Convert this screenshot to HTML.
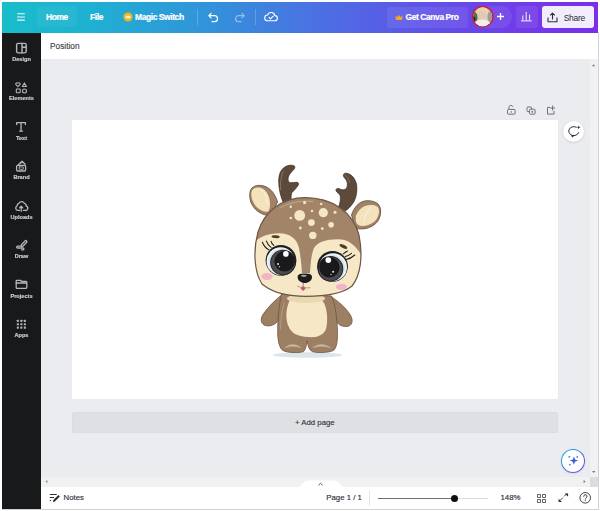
<!DOCTYPE html>
<html><head><meta charset="utf-8">
<style>
*{box-sizing:border-box;margin:0;padding:0}
html,body{width:600px;height:511px;overflow:hidden;background:#fff;font-family:"Liberation Sans",sans-serif}
.a{position:absolute}
#app{position:absolute;left:0;top:0;width:600px;height:511px;background:#fff;overflow:hidden}
#cv{left:41px;top:59px;width:557px;height:428px;background:#ebecf0}
#bordR{left:598px;top:32px;width:1px;height:478px;background:#d2d2d5}
#bordB{left:2px;top:509px;width:597px;height:1px;background:#d2d2d5}
#top{left:2px;top:2px;width:596px;height:30.7px;background:linear-gradient(90deg,#18bdca 0%,#1fb0d2 15%,#3392da 35%,#4a72e2 52%,#5e54e8 70%,#6e3ee9 85%,#7a2ee8 100%)}
#side{left:2px;top:32.7px;width:39px;height:476.3px;background:#18191b}
#hdr{left:41px;top:32.7px;width:557px;height:26.3px;background:#fff}
#bot{left:41px;top:487px;width:557px;height:22px;background:#fff}
.t{position:absolute;white-space:nowrap;line-height:1}
.w{color:#fff;font-weight:bold;font-size:8.5px;letter-spacing:-0.43px;-webkit-text-stroke:0.2px #fff}
.sl{position:absolute;width:39px;text-align:center;color:#cdced1;font-weight:bold;font-size:5.6px;line-height:1;-webkit-text-stroke:0.18px #cdced1;will-change:transform}
.si{position:absolute}
</style></head><body>
<div id="app">
  <div id="top" class="a">
    <!-- hamburger -->
    <svg class="a" style="left:14px;top:10px" width="10" height="10" viewBox="0 0 10 10"><path d="M1.5 1.7h7M1.5 4.9h7M1.5 8.1h7" stroke="#eefafb" stroke-width="1.05" stroke-linecap="round"/></svg>
    <div class="a" style="left:35px;top:4px;width:40px;height:21px;border-radius:3px;background:rgba(255,255,255,0.05)"></div>
    <div class="t w" style="left:44px;top:11px">Home</div>
    <div class="t w" style="left:88px;top:11px">File</div>
    <svg class="a" style="left:121px;top:10px" width="10" height="10" viewBox="0 0 10 10"><circle cx="5" cy="5" r="4.6" fill="#f5b21b"/><path d="M2.8 6.3L2.5 3.4 3.9 4.6 5 3 6.1 4.6 7.5 3.4 7.2 6.3z" fill="#fff"/></svg>
    <div class="t w" style="left:133px;top:11px">Magic Switch</div>
    <div class="a" style="left:195px;top:7px;width:1px;height:16px;background:rgba(255,255,255,0.2)"></div>
    <svg class="a" style="left:205px;top:9px" width="13" height="12" viewBox="0 0 13 12"><path d="M4 2.5L1.8 4.7 4 6.9M2 4.7h5.5a3 3 0 0 1 0 6H5" fill="none" stroke="#fff" stroke-width="1.2" stroke-linecap="round" stroke-linejoin="round"/></svg>
    <svg class="a" style="left:231px;top:9px" width="13" height="12" viewBox="0 0 13 12"><path d="M9 2.5l2.2 2.2L9 6.9M11 4.7H5.5a3 3 0 0 0 0 6H8" fill="none" stroke="rgba(255,255,255,0.45)" stroke-width="1.2" stroke-linecap="round" stroke-linejoin="round"/></svg>
    <div class="a" style="left:253px;top:7px;width:1px;height:16px;background:rgba(255,255,255,0.2)"></div>
    <svg class="a" style="left:262px;top:9px" width="14" height="11" viewBox="0 0 14 11"><path d="M3.6 9.8h7a2.6 2.6 0 0 0 .3-5.2A3.8 3.8 0 0 0 3.6 4 2.9 2.9 0 0 0 3.6 9.8z" fill="none" stroke="#fff" stroke-width="1.1" stroke-linejoin="round"/><path d="M5 6.4l1.5 1.5 2.7-2.7" fill="none" stroke="#fff" stroke-width="1.1" stroke-linecap="round" stroke-linejoin="round"/></svg>

    <div class="a" style="left:385px;top:5px;width:81px;height:21px;border-radius:3px;background:rgba(255,255,255,0.08)"></div>
    <svg class="a" style="left:393px;top:12px" width="8" height="7" viewBox="0 0 8 7"><path d="M1 6L.4 1.5 2.5 3.3 4 .8 5.5 3.3 7.6 1.5 7 6z" fill="#f5a623"/></svg>
    <div class="t w" style="left:403.5px;top:11px">Get Canva Pro</div>
    <div class="a" style="left:470px;top:4px;width:40px;height:22px;border-radius:11px;background:rgba(255,255,255,0.08)"></div>
    <svg class="a" style="left:468px;top:2px" width="30" height="30" viewBox="470 4 30 30">
      <defs><clipPath id="av"><circle cx="482.7" cy="16.7" r="9.5"/></clipPath></defs>
      <circle cx="482.7" cy="16.7" r="10.8" fill="#e0121f"/>
      <g clip-path="url(#av)">
        <rect x="472" y="6" width="22" height="22" fill="#cfd0c8"/>
        <ellipse cx="474.5" cy="17" rx="3.2" ry="5" fill="#52704a"/>
        <ellipse cx="473.8" cy="19" rx="1.8" ry="2.5" fill="#1f2a22"/>
        <ellipse cx="490.5" cy="17" rx="3" ry="6" fill="#9c9d98"/>
        <ellipse cx="482" cy="11.5" rx="6" ry="5" fill="#e6d3b6"/>
        <ellipse cx="481.8" cy="16" rx="4.3" ry="5" fill="#e3c8b2"/>
        <ellipse cx="482.5" cy="26" rx="9" ry="6.5" fill="#f2f0ec"/>
      </g>
    </svg>
    <svg class="a" style="left:494px;top:10px" width="9" height="9" viewBox="0 0 9 9"><path d="M4.5 1v7M1 4.5h7" stroke="#fff" stroke-width="1.3"/></svg>
    <div class="a" style="left:514px;top:4px;width:22px;height:22px;border-radius:3px;background:rgba(255,255,255,0.08)"></div>
    <svg class="a" style="left:519px;top:10px" width="11" height="10" viewBox="0 0 11 10"><path d="M0 8.9h10.7M1.8 8.6V3.5M5.2 8.6V0M8.6 8.6V2.5" stroke="#fff" stroke-width="0.9"/></svg>
    <div class="a" style="left:540px;top:4px;width:52px;height:22px;border-radius:3px;background:#f1edfc"></div>
    <svg class="a" style="left:545px;top:10px" width="11" height="11" viewBox="0 0 11 11"><path d="M5.5 7.5V1.2M3.2 3.4L5.5 1.1 7.8 3.4M1 5.5v4.3h9V5.5" fill="none" stroke="#2d2f36" stroke-width="1.1" stroke-linejoin="round"/></svg>
    <div class="t" style="left:561.7px;top:11.5px;font-size:8.5px;color:#2d2f36;letter-spacing:-0.28px">Share</div>
  </div>

  <div id="side" class="a"></div>
  <div class="sl" style="left:2px;top:56.8px">Design</div>
  <div class="sl" style="left:2px;top:95.7px">Elements</div>
  <div class="sl" style="left:2px;top:135.8px">Text</div>
  <div class="sl" style="left:2px;top:174.6px">Brand</div>
  <div class="sl" style="left:2px;top:214.5px">Uploads</div>
  <div class="sl" style="left:2px;top:254.3px">Draw</div>
  <div class="sl" style="left:2px;top:293.6px">Projects</div>
  <div class="sl" style="left:2px;top:332.8px">Apps</div>
  <svg class="a" style="left:0;top:0" width="42" height="350" viewBox="0 0 42 350">
    <g fill="none" stroke="#b6b7bb" stroke-width="1.3" stroke-linejoin="round" stroke-linecap="round">
      <!-- design -->
      <rect x="16.6" y="43.4" width="9.6" height="9.5" rx="1.7" stroke-width="1.4"/>
      <path d="M22 43.6v9.2M22 47.3h4.2" stroke-width="1.4"/>
      <!-- elements -->
      <path d="M17.95 86.6L15.7 84.3A1.4 1.4 0 0 1 17.95 83.1A1.4 1.4 0 0 1 20.2 84.3Z" stroke-width="1.05"/>
      <path d="M24.4 82.9l2.1 3.6h-4.2z" stroke-width="1.05"/>
      <rect x="16.3" y="88.9" width="3.9" height="3.9" rx="0.6" stroke-width="1.05"/>
      <circle cx="24.5" cy="90.9" r="2" stroke-width="1.05"/>
      <!-- text -->
      <path d="M16.7 124.6v-1.9h8.7v1.9M21.05 122.8v8.3M19.6 131.1h2.9"/>
      <!-- brand -->
      <rect x="16.6" y="165.4" width="9" height="5.6" rx="1.2"/>
      <rect x="19.2" y="166.9" width="4.1" height="2.4" rx="0.3" stroke-width="0.9"/>
      <path d="M18.3 164.8l3.8-3.6 3 3"/>
      <path d="M20.2 163.3l2.2-1.3"/>
      <!-- uploads -->
      <path d="M19.4 210.4h-1.4a2.3 2.3 0 0 1-.9-4.4 2.2 2.2 0 0 1 1.6-2.4 3.1 3.1 0 0 1 5.6-.3 2.2 2.2 0 0 1 1.7 2.6 2.3 2.3 0 0 1-1 4.5h-1.6"/>
      <path d="M21.2 211.3v-5M19.6 207.9l1.6-1.6 1.6 1.6"/>
      <!-- draw -->
      <path d="M21.4 244.8l3.7-3.9a1 1 0 0 1 1.5 1.4l-3.7 3.9-1.9.4z"/>
      <path d="M20.2 246.2h-2.6a.9.9 0 0 0 0 1.8h5.4a.9.9 0 0 1 0 1.8h-1.5"/>
      <!-- projects -->
      <path d="M16.2 287.6v-6.6a.7.7 0 0 1 .7-.7h3.6l1.2 1.2h4.4a.7.7 0 0 1 .7.7v5.4a.8.8 0 0 1-.8.8h-9a.8.8 0 0 1-.8-.8z"/>
      <path d="M16.3 283h10.2"/>
    </g>
    <g fill="#b3b4b8">
      <rect x="16.8" y="319.8" width="2.1" height="2.1" rx="0.4"/><rect x="20.3" y="319.8" width="2.1" height="2.1" rx="0.4"/><rect x="23.8" y="319.8" width="2.1" height="2.1" rx="0.4"/>
      <rect x="16.8" y="323.2" width="2.1" height="2.1" rx="0.4"/><rect x="20.3" y="323.2" width="2.1" height="2.1" rx="0.4"/><rect x="23.8" y="323.2" width="2.1" height="2.1" rx="0.4"/>
      <rect x="16.8" y="326.6" width="2.1" height="2.1" rx="0.4"/><rect x="20.3" y="326.6" width="2.1" height="2.1" rx="0.4"/><rect x="23.8" y="326.6" width="2.1" height="2.1" rx="0.4"/>
    </g>
  </svg>

  <div id="hdr" class="a">
    <div class="t" style="left:9px;top:9.3px;font-size:8.3px;color:#3a3c41;-webkit-text-stroke:0.12px #3a3c41">Position</div>
  </div>

  <div id="cv" class="a"></div>
  <!-- page -->
  <div class="a" style="left:71.7px;top:119.8px;width:486.6px;height:279.5px;background:#fff;box-shadow:0 0 1px rgba(0,0,0,0.06)"></div>
  <div class="a" style="left:71.7px;top:412px;width:486.6px;height:21px;background:#dfe0e4;border-radius:2.5px;box-shadow:inset 0 0 0 0.5px rgba(0,0,0,0.03)"></div>
  <div class="t" style="left:295px;top:419px;font-size:7.8px;color:#2f3136;-webkit-text-stroke:0.12px #2f3136">+ Add page</div>

  <svg class="a" style="left:230px;top:155px" width="170" height="210" viewBox="230 155 170 210">
    <defs>
      <clipPath id="headclip"><path d="M305 197.6C332 197.6 353 212 359 235C363 255 361 275 352 286C343 293.5 325 296.3 306 296.3C289 296.3 272 292.5 262 284C254 272 253 250 258 232C264 212 282 197.6 305 197.6Z"/></clipPath>
    </defs>
    <!-- shadow -->
    <ellipse cx="307.5" cy="355" rx="35" ry="2.8" fill="#dbe6eb"/>
    <!-- antlers -->
    <g fill="#5e4a3b" stroke="#3a2b22" stroke-width="0.7">
      <path d="M283.2 202.5C280.5 196 278.6 188 278.7 181C278.8 174 281 169.5 284.5 167.2C287.5 165.2 291 164.8 293.5 165.5C295 166 295.3 167.8 294.2 169C292 171.5 289 174 288.2 177.5C287.8 179.5 288.2 181.5 289.5 182.5C291.5 183 294.5 182.3 297 182.3C298.8 182.5 299 184 298 185.5C296.5 188 294 190.5 292 192.5C291 194.5 291 197 291.3 202.5Z"/>
      <path d="M338.8 206.5C340.5 202 341 197.5 339.8 194.8C338.5 193 336.5 192.5 336 190.5C335.7 188.5 337.5 188 339 188.7C341 189.6 343.5 190.3 345.5 189.3C347.8 187.5 347.8 183 346.5 180.5C345.5 178.5 343.5 177.5 343.3 175.5C343.3 173.5 345 172.9 347 173.3C351 174 355 178 356.5 184C357.5 190 356.5 197 354 201.5C351.5 206 348 209 345.5 211Z"/>
    </g>
    <path d="M280.6 190C280.1 183 280.9 176 283.2 171.5" fill="none" stroke="#8a7464" stroke-width="0.9" stroke-linecap="round"/>
    <path d="M345.2 175.2C347.5 177 349 179.5 349.6 182.5" fill="none" stroke="#8a7464" stroke-width="0.8" stroke-linecap="round"/>
    <!-- ears -->
    <g stroke="#6f5543" stroke-width="0.9">
      <path d="M277.5 202C275.5 194.5 271 189 266 186.8C261 184.6 255 184.8 252 188C249 191 249.3 197 250.8 202C252.5 207 257 212 263.8 214.6L271 216Z" fill="#a08366"/>
      <path d="M351.5 215C353.5 209 357 204 362 201.8C367 199.8 374 200.5 378 204C381.5 207.5 381.2 214 379 219C377 223.5 372 227 366 228.5C362 229.3 358.5 228.8 355.5 228.5Z" fill="#a08366"/>
    </g>
    <path d="M251.3 193C251.5 189 255 187.3 259 187.6C263 188 266.5 191 268.5 196C270.5 201 270.5 207 268.6 211.6C264 212.5 258.5 209.5 255 205C252.3 201.5 251.1 197 251.3 193Z" fill="#f4e2bd"/>
    <path d="M355.8 216C358 211 361 207.5 365 206C369.5 204.6 375 204.8 377.6 207C379.8 209.5 379.4 214 377 218.5C374.5 222.5 369 225.5 363 226C359.5 226.3 356.5 224.5 355.8 221Z" fill="#f4e2bd"/>
    <path d="M262 190C265 193 267 198 267.5 204" fill="none" stroke="#fbf1dc" stroke-width="1.2" stroke-linecap="round" opacity="0.8"/>
    <path d="M371 208C367 211 364.5 216 364 222" fill="none" stroke="#fbf1dc" stroke-width="1.2" stroke-linecap="round" opacity="0.8"/>
    <!-- arms -->
    <g fill="#9d7f63" stroke="#6f5543" stroke-width="0.8">
      <path d="M283 294C276 299 268 307 263.1 314.3C260 319 261 323 264 325C268 327 274 325.5 277 322C279 318 281 310 284 303Z"/>
      <path d="M330 296C337 300 346 308 349.9 314.3C353 319 353 324 349 326C345 327.5 340 326 337.5 323C335 318 333 309 329.5 303Z"/>
    </g>
    <!-- body -->
    <path d="M281.5 293.8C279 305 277.5 320 277.7 333.4C278 342 279.5 348 283 350.5C287 353 299 353 303.4 351.7C305.5 350 306.3 346 307.1 340.7C308 346 309 350 312.5 351.7C317 353 329 353 333.7 350.3C337 347 337.8 340 337.4 330C337 318 335.5 305 331.5 296Z" fill="#9d7f63" stroke="#6f5543" stroke-width="0.8"/>
    <path d="M290.2 299.7C287 305 286 313 286.5 318C287 326 291 333 297.5 335C302 337 311 337.5 315 337.1C320 336 324 334 326 329C328 322 327.5 310 324 303C321 298 316 296 313 296.7Z" fill="#f6e7c6"/>
    <path d="M284.8 347.6Q292.6 341.6 300.8 347.4Q292.6 344.8 284.8 347.6ZM313 347.4Q321.3 341.6 330.3 347.6Q321.3 344.8 313 347.4Z" fill="#cdb8a2" stroke="#cdb8a2" stroke-width="0.5" stroke-linejoin="round"/>
    <path d="M284.3 302.6C282 310 280.5 320 280.5 329" fill="none" stroke="#bba18a" stroke-width="0.8" stroke-linecap="round"/>
    <ellipse cx="306" cy="298.5" rx="19" ry="4.5" fill="#ead8b3"/>
    <!-- head -->
    <path d="M305 197.6C332 197.6 353 212 359 235C363 255 361 275 352 286C343 293.5 325 296.3 306 296.3C289 296.3 272 292.5 262 284C254 272 253 250 258 232C264 212 282 197.6 305 197.6Z" fill="#a28569"/>
    <g clip-path="url(#headclip)">
      <path d="M250 252C252 240 264 233.3 279 233.3C290 233.3 297 239 299 248C300.5 256 301.5 264 302 273L310 273C310.5 264 311 256 313.5 249C317 242 326 239.3 338 239.3C349 239.3 356 246 362 256L366 310L250 310Z" fill="#f6e7c6"/>
      <path d="M280 208C290 202 302 200.5 313 201.5" fill="none" stroke="#bca085" stroke-width="1.3" stroke-linecap="round"/>
    </g>
    <path d="M305 197.6C332 197.6 353 212 359 235C363 255 361 275 352 286C343 293.5 325 296.3 306 296.3C289 296.3 272 292.5 262 284C254 272 253 250 258 232C264 212 282 197.6 305 197.6Z" fill="none" stroke="#6f5543" stroke-width="1.2"/>
    <!-- spots -->
    <g fill="#f5e6c4">
      <circle cx="299.7" cy="215.4" r="5.4"/><circle cx="323.3" cy="212.7" r="4.6"/><circle cx="311.4" cy="222.6" r="3.4"/>
      <circle cx="312.8" cy="235.4" r="3.7"/><circle cx="331.1" cy="224.8" r="2.8"/><circle cx="304.6" cy="202.6" r="1.6"/>
      <circle cx="290.8" cy="206.7" r="1.2"/><circle cx="290.8" cy="218" r="1.3"/><circle cx="312" cy="211" r="1.2"/>
      <circle cx="321.2" cy="203.9" r="1.2"/><circle cx="335" cy="212.3" r="1.5"/><circle cx="300.4" cy="228" r="1.4"/>
      <circle cx="322.3" cy="228.6" r="1.4"/>
    </g>
    <!-- brows -->
    <ellipse cx="275.6" cy="236.7" rx="4.1" ry="1.4" fill="#4f3d2c" transform="rotate(3 275.6 236.7)"/>
    <ellipse cx="343.4" cy="246.5" rx="4.2" ry="1.6" fill="#4f3d2c" transform="rotate(24 343.4 246.5)"/>
    <!-- cheeks -->
    <ellipse cx="267" cy="276.5" rx="5.6" ry="3.4" fill="#f3b3c8"/>
    <ellipse cx="341.3" cy="286.8" rx="5.5" ry="3.1" fill="#f3b3c8"/>
    <!-- lashes -->
    <g fill="none" stroke="#1e1c1d" stroke-width="1.05" stroke-linecap="round">
      <path d="M268.8 249.8Q264.5 247.8 262.4 242.3"/><path d="M271 247.4Q267.8 245.2 266.4 241.1"/><path d="M273.8 245.4Q271.6 243.6 271.1 241.3"/>
      <path d="M343.3 253.8Q345.5 252 347.4 251"/><path d="M345.2 256.6Q348.5 255.8 351.5 253.4"/><path d="M346.2 259.5Q350.5 258.8 354.8 255"/>
    </g>
    <!-- eyes -->
    <circle cx="281" cy="260.3" r="15.4" fill="#1f1d1e"/>
    <circle cx="280.6" cy="261.2" r="14" fill="#eef4f7"/>
    <circle cx="281.6" cy="261.8" r="13.2" fill="#d4e6f0"/>
    <circle cx="283" cy="262.5" r="12.8" fill="#1d1d20"/>
    <circle cx="283" cy="262.5" r="11.9" fill="#4a4a4f"/>
    <circle cx="284.6" cy="261.2" r="10.2" fill="#19191c"/>
    <circle cx="285.9" cy="253.9" r="2.8" fill="#fff"/>
    <circle cx="278" cy="264" r="1" fill="#e6e6e6"/><circle cx="279.5" cy="266.8" r="0.7" fill="#cfcfcf"/>

    <circle cx="332.5" cy="266.3" r="15.4" fill="#1f1d1e"/>
    <circle cx="333" cy="267.2" r="14" fill="#eef4f7"/>
    <circle cx="331.9" cy="267.9" r="13.2" fill="#d4e6f0"/>
    <circle cx="330.5" cy="268.8" r="12.8" fill="#1d1d20"/>
    <circle cx="330.5" cy="268.8" r="11.9" fill="#4a4a4f"/>
    <circle cx="329.4" cy="267.3" r="10.2" fill="#19191c"/>
    <circle cx="328.3" cy="260.1" r="2.9" fill="#fff"/>
    <circle cx="333.1" cy="271.8" r="1" fill="#e6e6e6"/><circle cx="331" cy="274.5" r="0.7" fill="#cfcfcf"/>
    <!-- nose & mouth -->
    <path d="M297.6 277C297.6 274.2 300.8 273.6 304.8 273.6C308.8 273.6 312 274.2 312 277C312 280.6 308.5 283 304.8 283C301.1 283 297.6 280.6 297.6 277Z" fill="#1c1c1f"/>
    <ellipse cx="303.8" cy="275.8" rx="3" ry="1.1" fill="#a0a0a4"/>
    <path d="M303.2 283v3" stroke="#6d4b3b" stroke-width="0.6"/>
    <path d="M297.5 286.2Q300.5 288.6 303.2 286.6Q306 288.6 310 287.8" fill="none" stroke="#8a6a55" stroke-width="0.6" stroke-linecap="round"/>
    <path d="M303.1 286.6L305.3 288.6 303.1 290.6 300.9 288.6Z" fill="#d2457a" stroke="#d2457a" stroke-width="0.6" stroke-linejoin="round"/>
  </svg>

  <!-- page actions -->
  <svg class="a" style="left:500px;top:100px" width="60" height="20" viewBox="500 100 60 20">
    <g fill="none" stroke="#696c72" stroke-width="0.95" stroke-linejoin="round">
      <rect x="507.5" y="109.4" width="7.6" height="4.8" rx="0.9"/>
      <path d="M508.9 109.4v-1.9a2.05 2.05 0 0 1 4-.7"/>
      <rect x="527" y="107" width="4.6" height="4.6" rx="0.9"/>
      <rect x="529.5" y="109.2" width="5.6" height="5" rx="0.9" fill="#ebecf0"/>
      <path d="M554 111v3.1h-6.5v-6.7h2.6M552.6 105.5v5M550.2 108h4.8"/>
    </g>
    <path d="M511.3 111.1v1.7" stroke="#696c72" stroke-width="0.9"/>
    <path d="M532.3 110.8v2M531.3 111.8h2" stroke="#696c72" stroke-width="0.8"/>
  </svg>
  <!-- comment button -->
  <div class="a" style="left:562.9px;top:120.8px;width:21.6px;height:21.6px;border-radius:50%;background:#fff;box-shadow:0 0.5px 2px rgba(0,0,0,0.18)"></div>
  <svg class="a" style="left:565px;top:123px" width="18" height="18" viewBox="565 123 18 18">
    <path d="M576.4 127.2A5.1 4.5 0 1 0 578.7 132.6" fill="none" stroke="#2a2c31" stroke-width="1" stroke-linecap="round"/>
    <path d="M571 135.2L574.6 135.6 572.2 137.5Z" fill="#2a2c31"/>
    <path d="M578.7 125.4l.55 1.35 1.35.55-1.35.55-.55 1.35-.55-1.35-1.35-.55 1.35-.55z" fill="#2a2c31"/>
  </svg>
  <!-- magic button -->
  <div class="a" style="left:561px;top:449px;width:24px;height:24px;border-radius:50%;background:linear-gradient(135deg,#1ab7d6,#6b3df0);padding:1px;box-shadow:0 0.5px 2px rgba(0,0,0,0.12)"><div style="width:22px;height:22px;border-radius:50%;background:#fff"></div></div>
  <svg class="a" style="left:565px;top:453px" width="16" height="16" viewBox="565 453 16 16">
    <path d="M573.9 456.5l1.1 3 3 1.1-3 1.1-1.1 3-1.1-3-3-1.1 3-1.1z" fill="#3b5de0"/>
    <circle cx="569.4" cy="456.7" r="1" fill="#3aa3e0"/><circle cx="577.2" cy="456.9" r="0.9" fill="#4a78e6"/><circle cx="569.8" cy="464.6" r="0.9" fill="#4a78e6"/>
  </svg>
  <!-- scrollbars -->
  <div class="a" style="left:589.7px;top:59px;width:8.3px;height:418.3px;background:#f1f1f2"></div>
  <div class="a" style="left:41px;top:477.3px;width:548.7px;height:9.7px;background:#f1f1f2"></div>
  <div class="a" style="left:589.7px;top:477.3px;width:8.3px;height:9.7px;background:#dcdcdc"></div>

  <svg class="a" style="left:589px;top:59px" width="10" height="428" viewBox="589 59 10 428"><path d="M592 66.2l1.6-1.9 1.6 1.9z" fill="#77797e"/><path d="M592 470.9l1.7 2 1.7-2z" fill="#77797e"/></svg>
  <svg class="a" style="left:41px;top:477px" width="10" height="10" viewBox="41 477 10 10"><path d="M47.4 479.9l-2 1.7 2 1.7z" fill="#8d8f94"/></svg>
  <svg class="a" style="left:578px;top:477px" width="10" height="10" viewBox="578 477 10 10"><path d="M583.6 479.9l2 1.7-2 1.7z" fill="#77797e"/></svg>
  <div id="bot" class="a"></div>
  <!-- tab bump -->
  <svg class="a" style="left:296px;top:478px" width="50" height="10" viewBox="0 0 50 10"><path d="M0 9.5C6 9.5 6 2.5 13 2.5H37C44 2.5 44 9.5 50 9.5z" fill="#fff"/><path d="M22.5 7.2l2-1.8 2 1.8" fill="none" stroke="#3a3c42" stroke-width="0.9"/></svg>
  <svg class="a" style="left:48px;top:493px" width="13" height="10" viewBox="0 0 13 10"><path d="M1.8 1.5h6.9M1.8 4.5h4.2M1.8 7.5h1.2" stroke="#2d2f36" stroke-width="1"/><path d="M4.8 8.9l.6-2 5-5 1.5 1.5-5 5z" fill="#2d2f36"/></svg>
  <div class="t" style="left:63.6px;top:494px;font-size:7.8px;color:#2d2f36;-webkit-text-stroke:0.15px #2d2f36">Notes</div>
  <div class="t" style="left:326.3px;top:494px;font-size:7.8px;color:#2d2f36;-webkit-text-stroke:0.15px #2d2f36">Page 1 / 1</div>
  <div class="a" style="left:369px;top:490px;width:1px;height:16px;background:#e3e4e7"></div>
  <div class="a" style="left:378.4px;top:497.6px;width:76px;height:1.1px;background:#6e7076"></div>
  <div class="a" style="left:454px;top:497.6px;width:34px;height:1.1px;background:#d9dadd"></div>
  <div class="a" style="left:450.9px;top:494.6px;width:7px;height:7px;border-radius:50%;background:#0e0f12"></div>
  <div class="t" style="left:500.5px;top:494px;font-size:7.8px;color:#2d2f36;-webkit-text-stroke:0.15px #2d2f36">148%</div>
  <svg class="a" style="left:0;top:480px" width="600" height="31" viewBox="0 480 600 31">
    <g fill="none" stroke="#2d2f36" stroke-width="0.9">
      <path d="M537.5 494.5h3v3h-3zM542.5 494.5h3v3h-3zM537.5 499.5h3v3h-3zM542.5 499.5h3v3h-3z" stroke-width="0.8" stroke="#3a3c42"/>
      <path d="M560.2 500.3l2.7-2.7M564.1 496.4l2.7-2.7"/>
      <circle cx="585.2" cy="497.8" r="5.3"/>
    </g>
    <path d="M558.6 502.1v-3.4l3.4 3.4z M568.1 493.4v3.4l-3.4-3.4z" fill="#2d2f36"/>
    <path d="M583.7 496.4A1.65 1.65 0 1 1 586.1 497.8Q585.3 498.3 585.3 499.1" fill="none" stroke="#2d2f36" stroke-width="0.9" stroke-linecap="round"/><circle cx="585.3" cy="500.6" r="0.55" fill="#2d2f36"/>
  </svg>
  <div id="bordR" class="a"></div><div id="bordB" class="a"></div>
</div>
</body></html>
